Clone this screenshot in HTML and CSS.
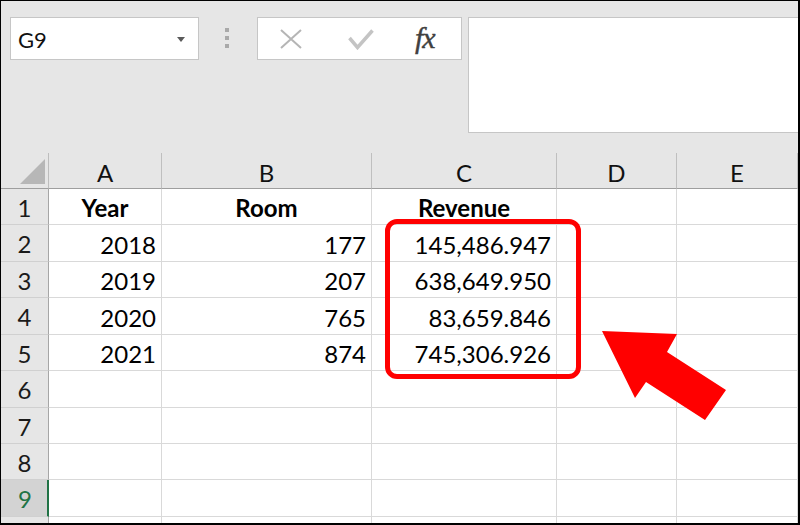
FILE: index.html
```html
<!DOCTYPE html>
<html lang="en">
<head>
<meta charset="utf-8">
<title>Excel sheet</title>
<link rel="stylesheet" href="styles.css">
</head>
<body>
<div class="frame">
  <div class="toolbar">
    <div class="namebox"><span class="name">G9</span><span class="caret"></span></div>
    <div class="grip"><i></i><i></i><i></i></div>
    <div class="fxgroup">
      <svg class="icon-x" width="22" height="20" viewBox="0 0 22 20"><path d="M1 1 L21 19 M21 1 L1 19" stroke="#b5b5b5" stroke-width="2" fill="none"/></svg>
      <svg class="icon-check" width="26" height="21" viewBox="0 0 26 21"><path d="M1.5 9 L9.5 18.5 L24.5 1.5" stroke="#c4c4c4" stroke-width="3.5" fill="none"/></svg>
      <span class="fx">fx</span>
    </div>
    <div class="formula"></div>
  </div>
  <div class="sheet">
    <div class="corner"><span class="tri"></span></div>
    <div class="colhead">A</div>
    <div class="colhead">B</div>
    <div class="colhead">C</div>
    <div class="colhead">D</div>
    <div class="colhead">E</div>

    <div class="rowhead">1</div>
    <div class="cell head">Year</div>
    <div class="cell head">Room</div>
    <div class="cell head">Revenue</div>
    <div class="cell"></div>
    <div class="cell"></div>

    <div class="rowhead">2</div>
    <div class="cell num">2018</div>
    <div class="cell num">177</div>
    <div class="cell num">145,486.947</div>
    <div class="cell"></div>
    <div class="cell"></div>

    <div class="rowhead">3</div>
    <div class="cell num">2019</div>
    <div class="cell num">207</div>
    <div class="cell num">638,649.950</div>
    <div class="cell"></div>
    <div class="cell"></div>

    <div class="rowhead">4</div>
    <div class="cell num">2020</div>
    <div class="cell num">765</div>
    <div class="cell num">83,659.846</div>
    <div class="cell"></div>
    <div class="cell"></div>

    <div class="rowhead">5</div>
    <div class="cell num">2021</div>
    <div class="cell num">874</div>
    <div class="cell num">745,306.926</div>
    <div class="cell"></div>
    <div class="cell"></div>

    <div class="rowhead">6</div>
    <div class="cell"></div><div class="cell"></div><div class="cell"></div><div class="cell"></div><div class="cell"></div>

    <div class="rowhead">7</div>
    <div class="cell"></div><div class="cell"></div><div class="cell"></div><div class="cell"></div><div class="cell"></div>

    <div class="rowhead">8</div>
    <div class="cell"></div><div class="cell"></div><div class="cell"></div><div class="cell"></div><div class="cell"></div>

    <div class="rowhead active">9</div>
    <div class="cell"></div><div class="cell"></div><div class="cell"></div><div class="cell"></div><div class="cell"></div>

    <div class="rowhead last"></div>
    <div class="cell last"></div><div class="cell last"></div><div class="cell last"></div><div class="cell last"></div><div class="cell last"></div>
  </div>
  <div class="highlight"></div>
  <svg class="arrow" width="145" height="110" viewBox="0 0 145 110"><polygon points="12,11 87,14 77,32 136,70 115,100 56,62 45,78" fill="#ff0000"/></svg>
</div>
</body>
</html>
```

FILE: styles.css
```css
* { box-sizing: border-box; }

html, body {
  margin: 0;
  padding: 0;
  background: #ffffff;
}

body {
  font-family: Lato, "Open Sans", sans-serif;
}

.frame {
  position: relative;
  width: 800px;
  height: 525px;
  border-top: 1px solid #000;
  border-left: 1px solid #000;
  border-right: 2px solid #000;
  border-bottom: 2px solid #000;
  background: #e6e6e6;
  overflow: hidden;
}

/* ---------- toolbar ---------- */
.toolbar {
  display: flex;
  align-items: flex-start;
  height: 152px;
  padding: 16px 0 0 9px;
}

.namebox {
  width: 189px;
  height: 43px;
  border: 1px solid #c6c6c6;
  background: #fff;
  display: flex;
  align-items: center;
  justify-content: space-between;
  padding: 1px 13px 0 7px;
}

.name {
  font-size: 22px;
  color: #111;
}

.caret {
  width: 0;
  height: 0;
  border-left: 4px solid transparent;
  border-right: 4px solid transparent;
  border-top: 5px solid #5a5a5a;
}

.grip {
  width: 58px;
  height: 43px;
  display: flex;
  flex-direction: column;
  align-items: center;
  gap: 4px;
  padding-top: 11px;
  padding-right: 2px;
}

.grip i {
  display: block;
  width: 4px;
  height: 4px;
  background: #a9a9a9;
}

.fxgroup {
  width: 205px;
  height: 43px;
  border: 1px solid #c6c6c6;
  background: #fff;
  display: flex;
  align-items: center;
  padding-left: 22px;
}

.icon-check {
  margin-left: 46px;
  margin-top: 2px;
}

.fx {
  margin-left: 41px;
  font-family: "Liberation Serif", "DejaVu Serif", serif;
  font-style: italic;
  font-size: 30px;
  line-height: 1;
  color: #404040;
  letter-spacing: -1px;
  margin-top: -2px;
  -webkit-text-stroke: 0.4px #404040;
}

.formula {
  flex: 1;
  margin-left: 6px;
  height: 116px;
  border: 1px solid #c6c6c6;
  border-right: none;
  background: #fff;
}

/* ---------- sheet ---------- */
.sheet {
  display: grid;
  grid-template-columns: 48px 113px 210px 185px 120px 1fr;
  grid-template-rows: 36px 36px 37px 36px 37px 36px 37px 36px 36px 37px 1fr;
  height: 370px;
  font-size: 24px;
  color: #000;
}

.corner {
  position: relative;
  background: #e6e6e6;
  border-right: 1px solid #bdbdbd;
  border-bottom: 1px solid #9e9e9e;
}

.tri {
  position: absolute;
  right: 3px;
  bottom: 4px;
  width: 0;
  height: 0;
  border-left: 25px solid transparent;
  border-bottom: 25px solid #b7b7b7;
}

.colhead {
  background: #e6e6e6;
  border-right: 1px solid #bfbfbf;
  border-bottom: 1px solid #9e9e9e;
  display: flex;
  align-items: center;
  justify-content: center;
  padding-top: 4px;
  color: #111;
}

.rowhead {
  background: #e6e6e6;
  border-right: 1px solid #a6a6a6;
  border-bottom: 1px solid #d0d0d0;
  display: flex;
  align-items: center;
  justify-content: center;
  padding-top: 1px;
  color: #1a1a1a;
}

.rowhead.active {
  background: #d3d3d3;
  color: #217346;
  border-right: 2px solid #217346;
  padding-left: 2px;
}

.cell {
  background: #fff;
  border-right: 1px solid #d9d9d9;
  border-bottom: 1px solid #d9d9d9;
  display: flex;
  align-items: center;
  padding: 2px 5px 0;
  white-space: nowrap;
}

.cell.num {
  justify-content: flex-end;
}

.cell.head {
  justify-content: center;
  font-weight: 700;
}

.rowhead.last,
.cell.last {
  border-bottom: none;
}

/* ---------- overlays ---------- */
.highlight {
  position: absolute;
  left: 384px;
  top: 218px;
  width: 196px;
  height: 160px;
  border: 5px solid #ff0000;
  border-radius: 12px;
}

.arrow {
  position: absolute;
  left: 589px;
  top: 319px;
}
```
